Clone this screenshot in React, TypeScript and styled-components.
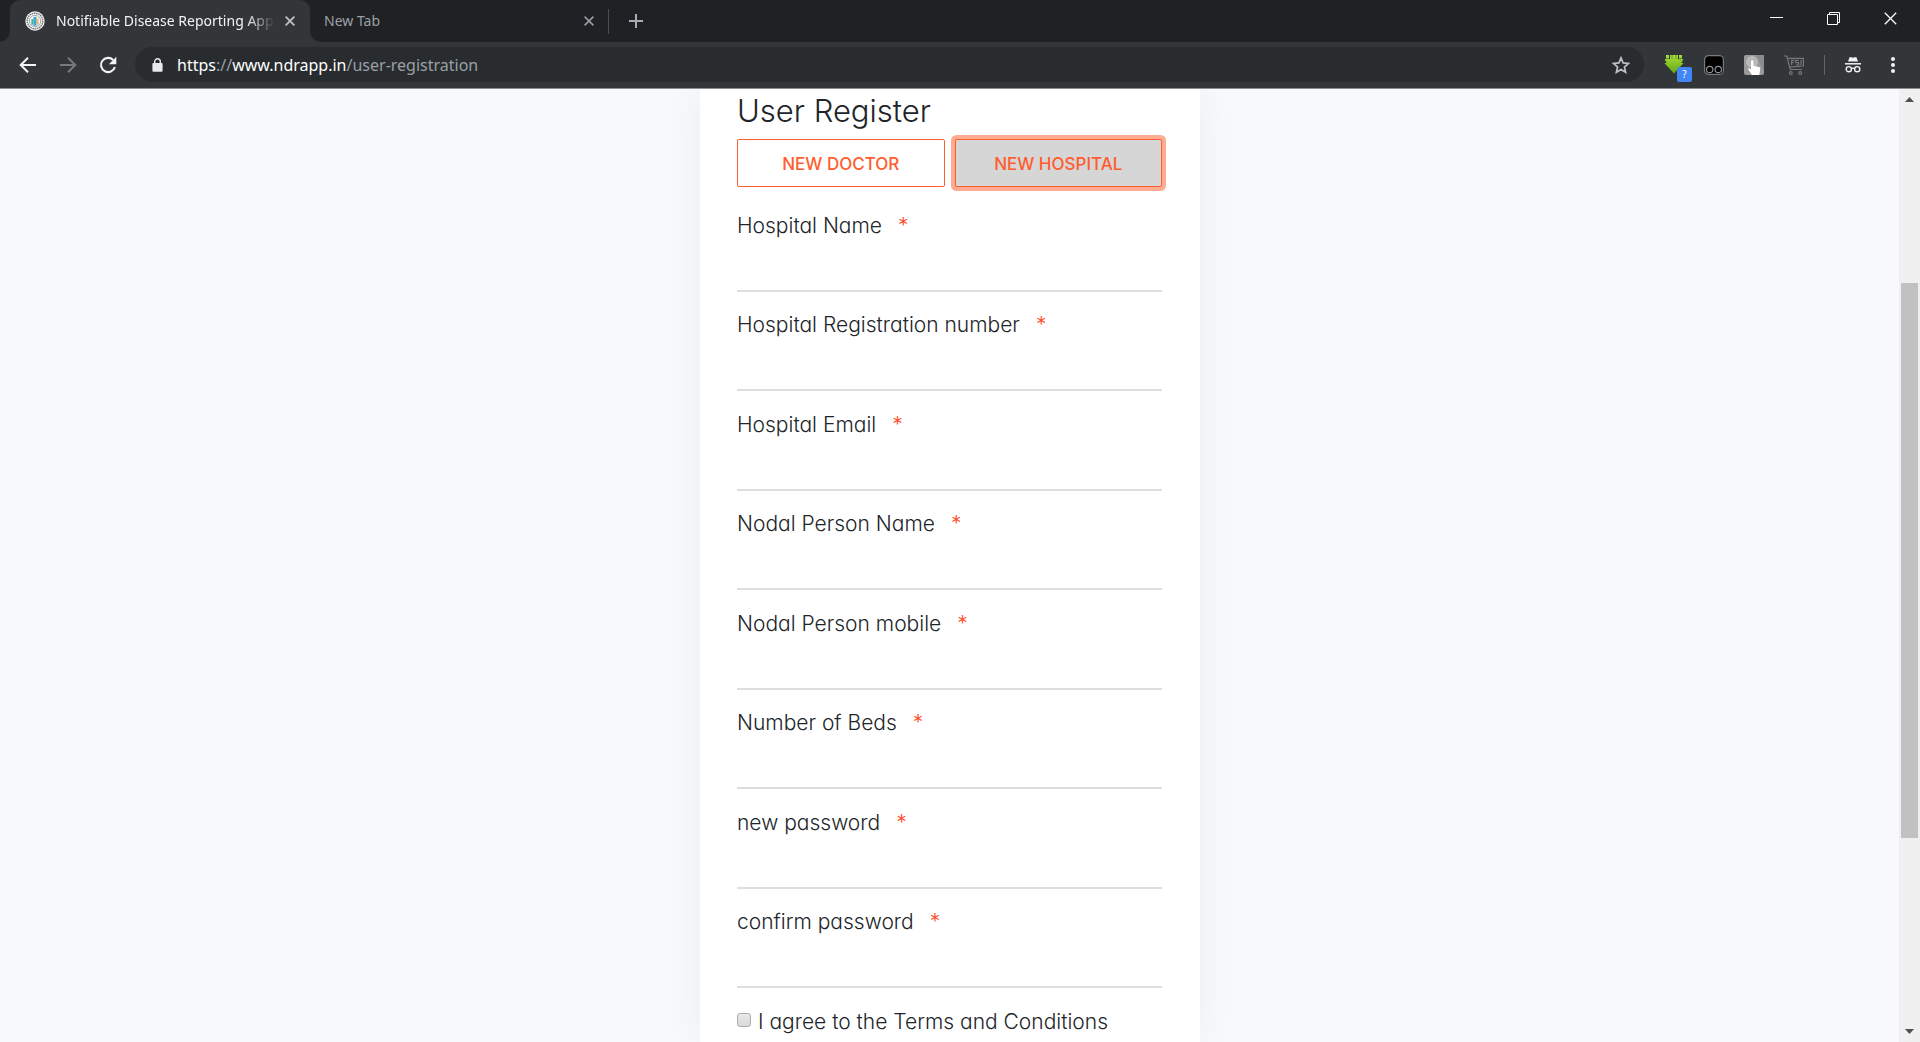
import React, { useState } from "react";
import styled, { createGlobalStyle } from "styled-components";

const uiFont = `"Noto Sans", "Open Sans", sans-serif`;
const pageFont = `Inter, "Liberation Sans", sans-serif`;
const accent = "#ff5d2e";

const GlobalStyle = createGlobalStyle`
  *, *::before, *::after { box-sizing: border-box; }
  body { margin: 0; overflow: hidden; }
  button, input { font: inherit; }
`;

const Browser = styled.div`
  display: flex;
  flex-direction: column;
  height: 100vh;
  background: #f8f9fb;
  font-family: ${uiFont};
`;

const TabStrip = styled.header`
  display: flex;
  flex: none;
  height: 42px;
  padding-left: 10px;
  background: #202124;
  color: #9aa0a6;
`;

const Tab = styled.div<{ $active?: boolean }>`
  position: relative;
  display: flex;
  align-items: center;
  width: ${(p) => (p.$active ? 300 : 298)}px;
  padding: 0 ${(p) => (p.$active ? 10 : 9)}px 0 ${(p) => (p.$active ? 15 : 14)}px;
  border-radius: 10px 10px 0 0;
  background: ${(p) => (p.$active ? "#323639" : "transparent")};
  color: ${(p) => (p.$active ? "#f1f3f4" : "#9aa0a6")};
  font-size: 14px;
  ${(p) =>
    p.$active &&
    `&::before, &::after {
      content: "";
      position: absolute;
      bottom: 0;
      width: 10px;
      height: 10px;
    }
    &::before { left: -10px; background: radial-gradient(circle at 0 0, transparent 9px, #323639 10px); }
    &::after { right: -10px; background: radial-gradient(circle at 100% 0, transparent 9px, #323639 10px); }`}
`;

const TabTitle = styled.span<{ $fade?: boolean }>`
  flex: 1;
  min-width: 0;
  margin-right: 5px;
  overflow: hidden;
  white-space: nowrap;
  line-height: 20px;
  ${(p) => p.$fade && "padding-left: 11px; mask-image: linear-gradient(to left, transparent, #000 28px);"}
`;

const IconButton = styled.button<{ $width?: number }>`
  position: relative;
  display: flex;
  flex: none;
  align-items: center;
  justify-content: center;
  width: ${(p) => p.$width ?? 40}px;
  padding: 0;
  border: 0;
  background: transparent;
  color: inherit;
  svg { display: block; }
`;

const CloseTab = styled(IconButton)`
  color: #bdc1c6;
`;

const TabDivider = styled.span`
  align-self: center;
  width: 1px;
  height: 25px;
  background: #4a4d51;
`;

const WindowControls = styled.div`
  display: flex;
  margin-left: auto;
  padding: 0 1px 5px 0;
  color: #fff;
`;

const Toolbar = styled.nav`
  display: flex;
  flex: none;
  align-items: stretch;
  height: 47px;
  padding: 5px 7px 6px 8px;
  border-bottom: 1px solid #8b8d8f;
  background: #323639;
  color: #f1f3f4;
`;

const Omnibox = styled.div`
  display: flex;
  flex: 1;
  align-items: center;
  margin: 0 10px 0 7px;
  padding: 0 14px 0 17px;
  border-radius: 18px;
  background: #282c2f;
  color: #e8eaed;
`;

const Address = styled.a`
  flex: 1;
  margin-left: 14px;
  color: #9aa0a6;
  font-size: 16px;
  line-height: 24px;
  text-decoration: none;
  b { color: #fff; font-weight: 400; }
`;

const ToolbarDivider = styled.span`
  align-self: center;
  width: 1px;
  height: 20px;
  margin: 0 8px 0 10px;
  background: #606468;
`;

const Badge = styled.span`
  position: absolute;
  right: 2px;
  bottom: 0;
  width: 15px;
  height: 15px;
  border-radius: 2px;
  background: #4285f4;
  color: #fff;
  font-size: 10px;
  line-height: 15px;
  text-align: center;
`;

const Viewport = styled.div`
  display: flex;
  flex: 1;
  min-height: 0;
`;

const Page = styled.main`
  display: flex;
  flex: 1;
  justify-content: center;
  overflow: hidden;
  padding-left: 1px;
  background: #f8f9fb;
  color: #212529;
  font-family: ${pageFont};
  font-feature-settings: "cv11";
`;

const Card = styled.form`
  display: flex;
  flex-direction: column;
  width: 500px;
  padding: 4px 38px 5px 37px;
  background: #fff;
  box-shadow: 0 0 40px rgba(0, 0, 0, 0.05);
`;

const Title = styled.h1`
  margin: 0 0 10px;
  font-size: 31px;
  font-weight: 300;
  line-height: 36px;
`;

const TypeSwitch = styled.div`
  display: grid;
  grid-template-columns: 1fr 1fr;
  gap: 10px;
  margin-bottom: 24px;
`;

const TypeButton = styled.button<{ $selected: boolean }>`
  height: 48px;
  padding: 1px 0 0;
  border: 1px solid ${accent};
  border-radius: 2px;
  background: ${(p) => (p.$selected ? "#d6d6d6" : "#fff")};
  box-shadow: ${(p) => (p.$selected ? "0 0 0 4px #ffab91" : "none")};
  color: ${accent};
  font-size: 17px;
  font-weight: 500;
  text-transform: uppercase;
  outline: none;
`;

const Fields = styled.div`
  display: flex;
  flex: 1;
  flex-direction: column;
  justify-content: space-between;
  margin-bottom: 19px;
`;

const Field = styled.div`
  display: flex;
  flex-direction: column;
`;

const Label = styled.label`
  font-size: 21px;
  font-weight: 300;
  line-height: 30px;
`;

const Required = styled.span`
  margin-left: 16px;
  color: #ff4a26;
`;

const TextInput = styled.input`
  width: 100%;
  height: 51px;
  padding: 0;
  border: 0;
  border-bottom: 2px solid #dedede;
  background: transparent;
  outline: none;
`;

const Terms = styled.div`
  display: flex;
  align-items: center;
  gap: 7px;
`;

const Checkbox = styled.input`
  appearance: none;
  width: 14px;
  height: 14px;
  margin: 0 0 4px;
  border: 1px solid #adadad;
  border-radius: 3px;
  background: linear-gradient(#e9e9e9, #d8d8d8);
  &:checked { background: #777; }
`;

const Scrollbar = styled.aside`
  display: flex;
  flex: none;
  flex-direction: column;
  align-items: center;
  width: 21px;
  background: #f0f0f0;
  color: #505050;
`;

const ScrollTrack = styled.div`
  display: grid;
  flex: 1;
  grid-template-rows: 173fr 555fr 183fr;
  width: 17px;
`;

const ScrollThumb = styled.div`
  grid-row: 2;
  background: #c1c1c1;
`;

const ScrollButton = styled(IconButton)`
  height: 21px;
`;

const fields = [
  { id: "hospital-name", label: "Hospital Name", type: "text" },
  { id: "registration", label: "Hospital Registration number", type: "text" },
  { id: "email", label: "Hospital Email", type: "email" },
  { id: "nodal-name", label: "Nodal Person Name", type: "text" },
  { id: "nodal-mobile", label: "Nodal Person mobile", type: "tel" },
  { id: "beds", label: "Number of Beds", type: "text" },
  { id: "password", label: "new password", type: "password" },
  { id: "confirm", label: "confirm password", type: "password" },
];

const Favicon = () => (
  <svg width="20" height="20" viewBox="0 0 19 19">
    <circle cx="9.5" cy="9.5" r="9.2" fill="#f4f4f4" />
    <circle cx="9.5" cy="9.5" r="7.4" fill="none" stroke="#777" strokeWidth="1.3" strokeDasharray="1.5 .6" />
    <circle cx="9.5" cy="9.5" r="5.4" fill="#fff" stroke="#888" strokeWidth=".7" />
    <path d="M6 7.5h2v5.5H6z" fill="#45b97c" />
    <path d="M8 5.5h3V14H8z" fill="#36a6dc" />
    <path d="M11 7h2v6h-2z" fill="#f3b760" />
  </svg>
);

const Cross = ({ size = 10, width = 1.8 }: { size?: number; width?: number }) => (
  <svg width={size} height={size} viewBox="0 0 10 10" fill="none" stroke="currentColor" strokeWidth={width}>
    <path d="M.6.6l8.8 8.8M9.4.6L.6 9.4" />
  </svg>
);

const Arrow = ({ forward }: { forward?: boolean }) => (
  <svg width="18" height="18" viewBox="0 0 18 18" fill="none" stroke={forward ? "#76797c" : "#f1f3f4"} strokeWidth="2">
    <path d={forward ? "M1 9h15M9 1.7L16.3 9 9 16.3" : "M17 9H2M9 1.7L1.7 9 9 16.3"} />
  </svg>
);

const Reload = () => (
  <svg width="18" height="18" viewBox="0 0 18 18">
    <path d="M14.2 4A7.1 7.1 0 1 0 15.9 11" fill="none" stroke="currentColor" strokeWidth="2.1" />
    <path d="M17.3.8v7.4H9.9z" fill="currentColor" />
  </svg>
);

const Lock = () => (
  <svg width="11" height="14" viewBox="0 0 11 14">
    <path d="M2.7 6V3.6a2.8 2.8 0 0 1 5.6 0V6" fill="none" stroke="currentColor" strokeWidth="1.4" />
    <rect x=".4" y="5" width="10.2" height="8.8" rx="1" fill="currentColor" />
  </svg>
);

const Star = () => (
  <svg width="18" height="18" viewBox="0 0 18 18" fill="none" stroke="#bdc1c6" strokeWidth="1.7">
    <path d="M9 1.9l2.1 5 5.4.5-4.1 3.6 1.2 5.3L9 13.5l-4.6 2.8 1.2-5.3-4.1-3.6 5.4-.5z" />
  </svg>
);

const Downloader = () => (
  <svg width="20" height="20" viewBox="0 0 20 20">
    <defs>
      <linearGradient id="green" x1="0" y1="0" x2="0" y2="1">
        <stop offset="0" stopColor="#a6dc3a" />
        <stop offset="1" stopColor="#64a80e" />
      </linearGradient>
    </defs>
    <path d="M2 0h3v3.6H2zM15 0h3v3.6h-3zM6 0h8v8h5.6L10 18.5.4 8H2.6L.6 4H6z" fill="url(#green)" />
    <path d="M14 4h5.4l-2 4H14z" fill="#8cc926" />
    <path d="M8 0v4M12 0v4" stroke="#5d8c1a" strokeWidth=".8" />
  </svg>
);

const Monkey = () => (
  <svg width="20" height="20" viewBox="0 0 20 20">
    <rect x=".6" y=".6" width="18.8" height="18.8" rx="4" fill="#000" stroke="#77797b" strokeWidth="1.2" />
    <g fill="none" stroke="#8d8f91" strokeWidth="1.2">
      <circle cx="5.7" cy="14.5" r="3.2" />
      <circle cx="14.3" cy="14.5" r="3.2" />
    </g>
  </svg>
);

const Hand = () => (
  <svg width="20" height="20" viewBox="0 0 20 20">
    <rect width="20" height="20" rx="2" fill="#9b9b9b" />
    <path d="M12 0h8v17z" fill="#8b8b8b" />
    <circle cx="8" cy="7" r="5.2" fill="#b5b5b5" stroke="#c9c9c9" />
    <path d="M7 6.5c0-1.6 2.5-1.6 2.5 0v4.3l5.6 1.3c1 .3 1.3.9 1.1 1.9L15.3 20H8l-3.7-5.4c-.5-1 .5-1.8 1.3-1.2L7 14.6z" fill="#fff" />
  </svg>
);

const CartIcon = () => (
  <svg width="20" height="20" viewBox="0 0 20 20" fill="none" stroke="#77777a" strokeWidth="1.2">
    <path d="M0 1h2.8l3.4 13.5H18M3.5 3.3H19.4V11L5.6 12.2" />
    <path d="M7.6 10V5.4h2.8M7.6 7.5h2.2M14.6 5.4h-2.8v2.2h2.8V10h-2.8M17 5v5" />
    <circle cx="6.8" cy="18" r="1.4" />
    <circle cx="16.2" cy="18" r="1.4" />
  </svg>
);

const Incognito = () => (
  <svg width="18" height="18" viewBox="0 0 18 18" fill="none" stroke="#f1f3f4">
    <path d="M4 5.4L5.6 1.2h1.8l1.6.6 1.6-.6h1.8L14 5.4z" fill="#f1f3f4" stroke="none" />
    <path d="M1 7.8h16" strokeWidth="1.5" />
    <g strokeWidth="1.4">
      <circle cx="4.8" cy="13.2" r="2.6" />
      <circle cx="13.2" cy="13.2" r="2.6" />
      <path d="M7.3 12.6q1.7-1 3.4 0" />
    </g>
  </svg>
);

const Dots = () => (
  <svg width="4" height="18" viewBox="0 0 4 18" fill="#f1f3f4">
    <circle cx="2" cy="3" r="2" />
    <circle cx="2" cy="9" r="2" />
    <circle cx="2" cy="15" r="2" />
  </svg>
);

const Triangle = ({ down }: { down?: boolean }) => (
  <svg width="9" height="5" viewBox="0 0 9 5" fill="currentColor">
    <path d={down ? "M0 0h9L4.5 5z" : "M0 5h9L4.5 0z"} />
  </svg>
);

export default function App() {
  const [kind, setKind] = useState("hospital");
  return (
    <Browser>
      <GlobalStyle />
      <TabStrip>
        <Tab $active>
          <Favicon />
          <TabTitle $fade>Notifiable Disease Reporting App</TabTitle>
          <CloseTab $width={20} aria-label="Close tab"><Cross /></CloseTab>
        </Tab>
        <Tab>
          <TabTitle>New Tab</TabTitle>
          <IconButton $width={20} aria-label="Close tab"><Cross width={1.5} /></IconButton>
        </Tab>
        <TabDivider />
        <IconButton $width={54} aria-label="Open new tab">
          <svg width="14" height="14" viewBox="0 0 14 14" stroke="#a9adb1" strokeWidth="2"><path d="M7 0v14M0 7h14" /></svg>
        </IconButton>
        <WindowControls>
          <IconButton $width={57} aria-label="Minimize">
            <svg width="13" height="13" viewBox="0 0 13 13" fill="currentColor"><path d="M0 5h13v1H0z" /></svg>
          </IconButton>
          <IconButton $width={57} aria-label="Restore">
            <svg width="13" height="13" viewBox="0 0 13 13" fill="none" stroke="currentColor"><path d="M.5 2.5h10v10H.5zM2.5 2.5v-2h10v10h-2" /></svg>
          </IconButton>
          <IconButton $width={57} aria-label="Close window"><Cross size={13} width={1} /></IconButton>
        </WindowControls>
      </TabStrip>

      <Toolbar>
        <IconButton aria-label="Back"><Arrow /></IconButton>
        <IconButton aria-label="Forward"><Arrow forward /></IconButton>
        <IconButton aria-label="Reload"><Reload /></IconButton>
        <Omnibox>
          <Lock />
          <Address href="#user-registration"><b>https</b>://<b>www.ndrapp.in</b>/user-registration</Address>
          <IconButton $width={18} aria-label="Bookmark"><Star /></IconButton>
        </Omnibox>
        <IconButton aria-label="Downloader"><Downloader /><Badge>?</Badge></IconButton>
        <IconButton aria-label="Scripts"><Monkey /></IconButton>
        <IconButton aria-label="Pointer"><Hand /></IconButton>
        <IconButton aria-label="Cart"><CartIcon /></IconButton>
        <ToolbarDivider />
        <IconButton aria-label="Incognito"><Incognito /></IconButton>
        <IconButton aria-label="Menu"><Dots /></IconButton>
      </Toolbar>

      <Viewport>
        <Page>
          <Card onSubmit={(e) => e.preventDefault()}>
            <Title>User Register</Title>
            <TypeSwitch>
              <TypeButton type="button" $selected={kind === "doctor"} onClick={() => setKind("doctor")}>New Doctor</TypeButton>
              <TypeButton type="button" $selected={kind === "hospital"} onClick={() => setKind("hospital")}>New Hospital</TypeButton>
            </TypeSwitch>
            <Fields>
              {fields.map((f) => (
                <Field key={f.id}>
                  <Label htmlFor={f.id}>{f.label}<Required>*</Required></Label>
                  <TextInput id={f.id} type={f.type} />
                </Field>
              ))}
            </Fields>
            <Terms>
              <Checkbox id="terms" type="checkbox" />
              <Label htmlFor="terms">I agree to the Terms and Conditions</Label>
            </Terms>
          </Card>
        </Page>
        <Scrollbar>
          <ScrollButton $width={21} aria-label="Scroll up"><Triangle /></ScrollButton>
          <ScrollTrack><ScrollThumb /></ScrollTrack>
          <ScrollButton $width={21} aria-label="Scroll down"><Triangle down /></ScrollButton>
        </Scrollbar>
      </Viewport>
    </Browser>
  );
}
